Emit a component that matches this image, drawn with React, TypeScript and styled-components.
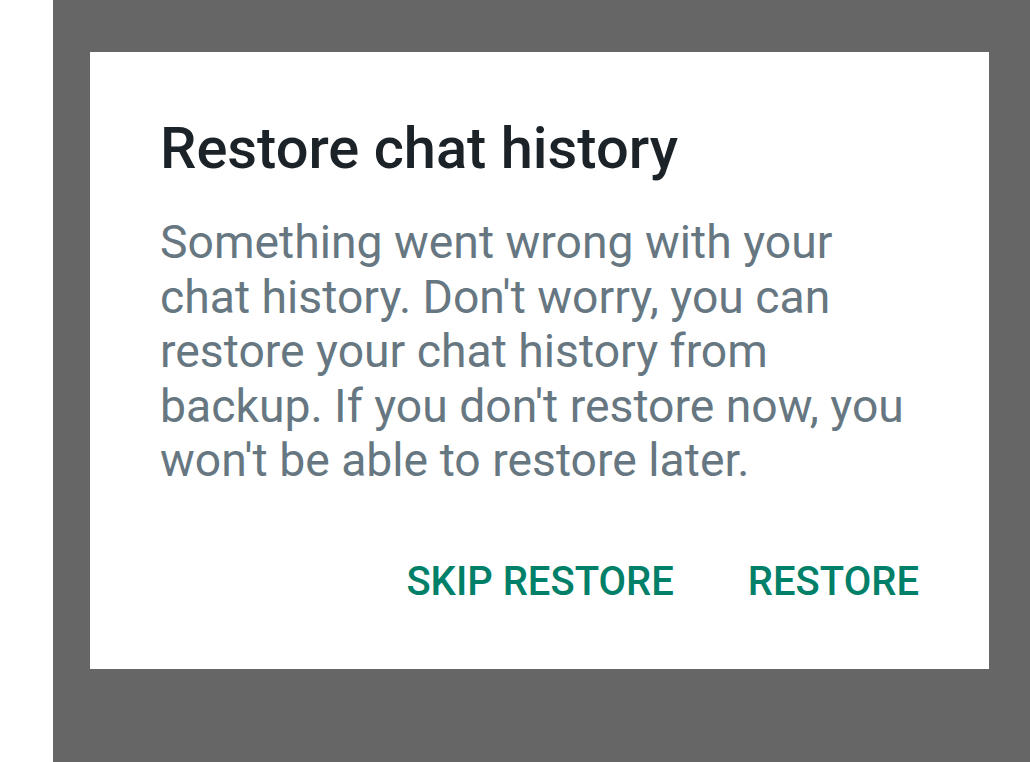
import React from 'react';
import styled, { createGlobalStyle } from 'styled-components';

const GlobalStyle = createGlobalStyle`
  html, body {
    margin: 0;
    padding: 0;
    background: #ffffff;
  }
  body {
    font-family: Roboto, "Noto Sans", Arial, sans-serif;
  }
`;

const Page = styled.div`
  display: flex;
  width: 1030px;
  height: 762px;
  overflow: hidden;
`;

const Gutter = styled.div`
  width: 53px;
  flex-shrink: 0;
  background: #ffffff;
`;

const Scrim = styled.div`
  flex: 1;
  background: #666666;
  padding: 52px 41px 0 37px;
`;

const Dialog = styled.div`
  background: #ffffff;
  height: 617px;
  box-sizing: border-box;
  padding: 67px 70px 0 70px;
  display: flex;
  flex-direction: column;
`;

const Title = styled.h1`
  margin: 0;
  font-size: 57.8px;
  line-height: 58px;
  font-weight: 500;
  color: #1b2228;
`;

const Message = styled.p`
  margin: 38px 0 0 0;
  font-size: 46.3px;
  line-height: 54.5px;
  font-weight: 400;
  color: #667781;
`;

const Actions = styled.div`
  display: flex;
  justify-content: flex-end;
  gap: 74px;
  margin-top: 70px;
  line-height: 47px;
`;

const ActionButton = styled.button`
  background: none;
  border: none;
  padding: 0;
  font-family: inherit;
  font-size: 40px;
  line-height: 47px;
  font-weight: 500;
  color: #008069;
  text-transform: uppercase;
  cursor: pointer;
`;

export default function App() {
  return (
    <Page>
      <GlobalStyle />
      <Gutter />
      <Scrim>
        <Dialog>
          <Title>Restore chat history</Title>
          <Message>
            Something went wrong with your chat history. Don't worry, you can
            restore your chat history from backup. If you don't restore now,
            you won't be able to restore later.
          </Message>
          <Actions>
            <ActionButton>Skip restore</ActionButton>
            <ActionButton>Restore</ActionButton>
          </Actions>
        </Dialog>
      </Scrim>
    </Page>
  );
}
